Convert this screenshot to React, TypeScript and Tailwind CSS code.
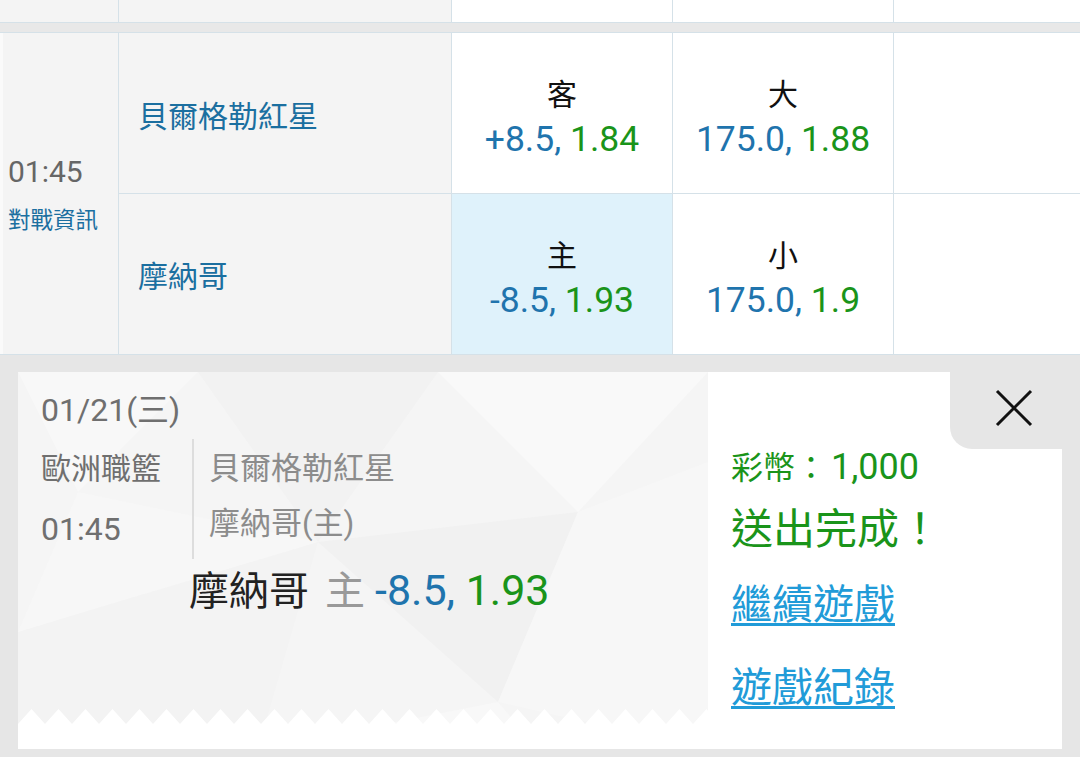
const font = { fontFamily: 'Roboto, "Noto Sans CJK TC", sans-serif' }

function Odds({ label, line, price, active }: { label: string; line: string; price: string; active?: boolean }) {
  return (
    <div className={`flex flex-col items-center justify-center pt-[9px] border-r border-[#d5e1e8] ${active ? 'bg-[#dff2fb]' : 'bg-white'}`}>
      <div className="text-[30px] leading-[44px] text-[#111]">{label}</div>
      <div className="text-[35.5px] leading-[44px]">
        <span className="text-[#1f74ad]">{line}, </span>
        <span className="text-[#1a941a]">{price}</span>
      </div>
    </div>
  )
}

function Zigzag() {
  const pts: string[] = []
  for (let i = 0; i <= 26; i++) {
    pts.push(`${i * 27},15`, `${i * 27 + 13.5},0`)
  }
  return (
    <svg className="absolute bottom-0 left-0" width="690" height="40" viewBox="0 0 690 40">
      <polygon points={`0,40 ${pts.join(' ')} 702,15 690,40`} fill="#ffffff" />
    </svg>
  )
}

function Pattern() {
  return (
    <svg className="absolute inset-0" width="690" height="377" viewBox="0 0 690 377">
      <rect width="690" height="377" fill="#f5f5f5" />
      <polygon points="0,0 180,0 60,120" fill="#f8f8f8" />
      <polygon points="180,0 420,0 300,170" fill="#f2f2f2" />
      <polygon points="60,120 300,170 0,260" fill="#f7f7f7" />
      <polygon points="420,0 690,0 560,140" fill="#f9f9f9" />
      <polygon points="300,170 560,140 480,330" fill="#f1f1f1" />
      <polygon points="0,260 300,170 240,377 0,377" fill="#f3f3f3" />
      <polygon points="560,140 690,90 690,377 480,330" fill="#f7f7f7" />
      <polygon points="240,377 480,330 520,377" fill="#f8f8f8" />
    </svg>
  )
}

export default function App() {
  return (
    <div className="w-[1080px] h-[757px] bg-[#e6e6e6] overflow-hidden" style={font}>
      {/* previous row tail */}
      <div className="grid grid-cols-[119px_333px_221px_221px_1fr] h-[22px]">
        <div className="bg-[#f4f4f4] border-r border-[#d5e1e8]" />
        <div className="bg-[#f4f4f4] border-r border-[#d5e1e8]" />
        <div className="bg-white border-r border-[#d5e1e8]" />
        <div className="bg-white border-r border-[#d5e1e8]" />
        <div className="bg-white" />
      </div>
      <div className="h-[11px] bg-[#e8e8e8] border-y border-[#d5e1e8]" />

      {/* match row */}
      <div className="grid grid-cols-[119px_333px_221px_221px_1fr] h-[322px] border-b border-[#d5e1e8]">
        <div className="bg-[#f4f4f4] border-r border-l-[3px] border-l-[#fafafa] border-[#d5e1e8] flex flex-col pl-[5px] pt-[119px]">
          <div className="text-[30px] leading-[40px] text-[#666]">01:45</div>
          <div className="text-[22.5px] leading-[32px] text-[#1b6fa0] mt-[12px]">對戰資訊</div>
        </div>
        <div className="bg-[#f4f4f4] border-r border-[#d5e1e8] grid grid-rows-2">
          <div className="flex items-center pl-[19px] pt-[7px] border-b border-[#d5e1e8] text-[30px] text-[#1b6fa0]">貝爾格勒紅星</div>
          <div className="flex items-center pl-[19px] pt-[5px] text-[30px] text-[#1b6fa0]">摩納哥</div>
        </div>
        <div className="grid grid-rows-2">
          <div className="grid border-b border-[#d5e1e8]">
            <Odds label="客" line="+8.5" price="1.84" />
          </div>
          <div className="grid">
            <Odds label="主" line="-8.5" price="1.93" active />
          </div>
        </div>
        <div className="grid grid-rows-2">
          <div className="grid border-b border-[#d5e1e8]">
            <Odds label="大" line="175.0" price="1.88" />
          </div>
          <div className="grid">
            <Odds label="小" line="175.0" price="1.9" />
          </div>
        </div>
        <div className="grid grid-rows-2 bg-white">
          <div className="border-b border-[#d5e1e8]" />
          <div />
        </div>
      </div>

      {/* bet slip result */}
      <div className="flex mt-[17px] ml-[18px] w-[1044px] h-[377px]">
        <div className="relative w-[690px] h-full">
          <Pattern />
          <Zigzag />
          <div className="relative pl-[23px] pt-[16px]">
            <div className="text-[32px] leading-[44px] text-[#6f6f6f]">01/21(三)</div>
            <div className="flex mt-[7px]">
              <div className="w-[153px] border-r-2 border-[#dddddd] pr-[10px]">
                <div className="text-[30px] leading-[60px] text-[#6f6f6f]">歐洲職籃</div>
                <div className="text-[32px] leading-[60px] text-[#6f6f6f]">01:45</div>
              </div>
              <div className="pl-[15px] text-[31px] text-[#8c8c8c]">
                <div className="leading-[60px]">貝爾格勒紅星</div>
                <div className="leading-[50px]">摩納哥(主)</div>
              </div>
            </div>
            <div className="mt-[6px] pl-[148px] text-[40px] leading-[50px]">
              <span className="text-[#222]">摩納哥</span>
              <span className="text-[#999] ml-[16px]">主</span>
              <span className="text-[43px] ml-[10px]">
                <span className="text-[#1f74ad]">-8.5, </span>
                <span className="text-[#1a941a]">1.93</span>
              </span>
            </div>
          </div>
        </div>
        <div className="flex-1 flex flex-col bg-white">
          <div className="flex h-[77px]">
            <div className="flex-1" />
            <div className="w-[112px] bg-[#e6e6e6] rounded-bl-[22px] flex items-center justify-center pl-[16px] pb-[6px]">
              <svg width="38" height="38" viewBox="0 0 38 38" fill="none" stroke="#111" strokeWidth="3">
                <path d="M2 2 L36 36 M36 2 L2 36" />
              </svg>
            </div>
          </div>
          <div className="pl-[23px]">
            <div className="text-[32px] leading-[36px] text-[#1a941a]">
              彩幣：<span className="text-[36px] ml-[4px]">1,000</span>
            </div>
            <div className="mt-[18px] text-[42px] leading-[52px] text-[#1a941a]">送出完成！</div>
            <div className="mt-[23px] text-[41px] leading-[52px]">
              <a className="text-[#219bd8] underline decoration-[3px] underline-offset-[4px]">繼續遊戲</a>
            </div>
            <div className="mt-[31px] text-[41px] leading-[52px]">
              <a className="text-[#219bd8] underline decoration-[3px] underline-offset-[4px]">遊戲紀錄</a>
            </div>
          </div>
        </div>
      </div>
    </div>
  )
}
